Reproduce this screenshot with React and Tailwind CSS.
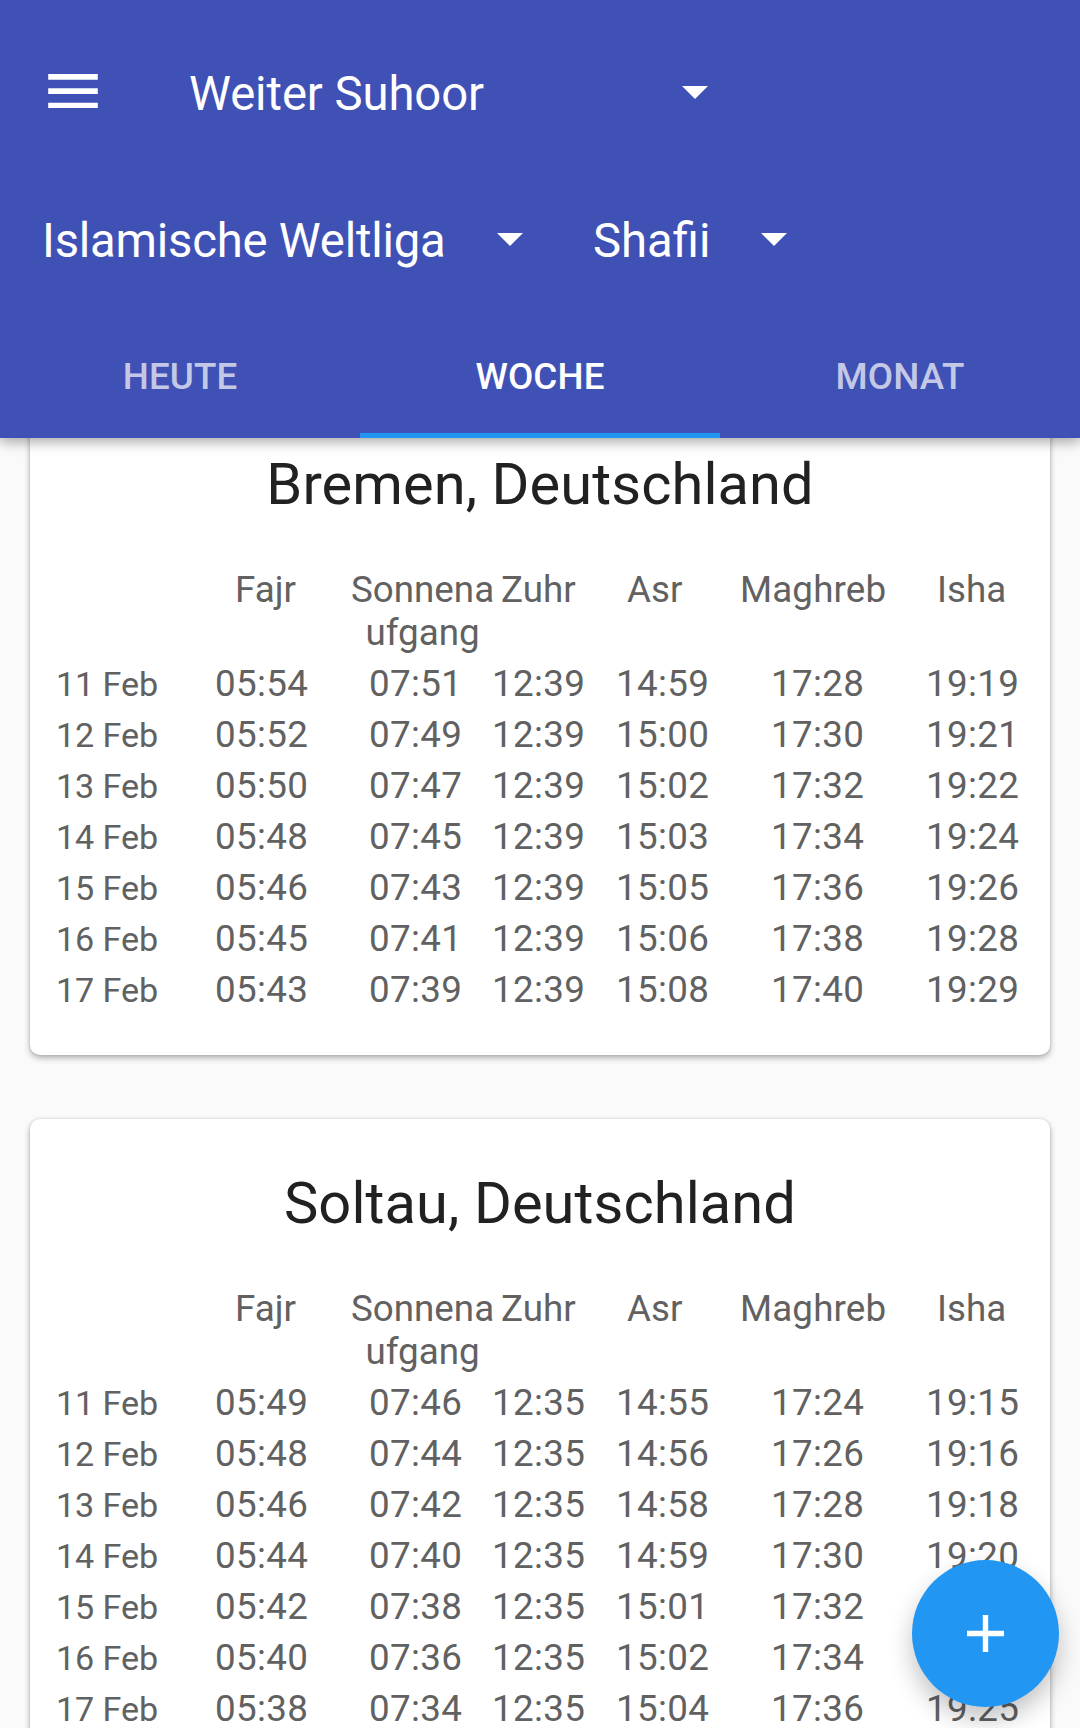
import React, { useState } from 'react'
import { clsx } from 'clsx'

const cities = [
  {
    name: 'Bremen, Deutschland',
    days: [
      ['11 Feb', '05:54', '07:51', '12:39', '14:59', '17:28', '19:19'],
      ['12 Feb', '05:52', '07:49', '12:39', '15:00', '17:30', '19:21'],
      ['13 Feb', '05:50', '07:47', '12:39', '15:02', '17:32', '19:22'],
      ['14 Feb', '05:48', '07:45', '12:39', '15:03', '17:34', '19:24'],
      ['15 Feb', '05:46', '07:43', '12:39', '15:05', '17:36', '19:26'],
      ['16 Feb', '05:45', '07:41', '12:39', '15:06', '17:38', '19:28'],
      ['17 Feb', '05:43', '07:39', '12:39', '15:08', '17:40', '19:29'],
    ],
  },
  {
    name: 'Soltau, Deutschland',
    days: [
      ['11 Feb', '05:49', '07:46', '12:35', '14:55', '17:24', '19:15'],
      ['12 Feb', '05:48', '07:44', '12:35', '14:56', '17:26', '19:16'],
      ['13 Feb', '05:46', '07:42', '12:35', '14:58', '17:28', '19:18'],
      ['14 Feb', '05:44', '07:40', '12:35', '14:59', '17:30', '19:20'],
      ['15 Feb', '05:42', '07:38', '12:35', '15:01', '17:32', '19:22'],
      ['16 Feb', '05:40', '07:36', '12:35', '15:02', '17:34', '19:23'],
      ['17 Feb', '05:38', '07:34', '12:35', '15:04', '17:36', '19:25'],
    ],
  },
]

const tabs = ['Heute', 'Woche', 'Monat']

const App = () => {

  const [active, setActive] = useState('Woche')

  return (
    <div className="relative flex h-[1728px] w-[1080px] flex-col overflow-hidden bg-[#fafafa] font-[Roboto,sans-serif]">

      {/* App bar */}
      <header className="relative z-10 flex h-[438px] shrink-0 flex-col bg-[#3f51b5] text-[47.25px] leading-[56px] text-white shadow-[0_4px_12px_rgba(0,0,0,0.34)]">

        <div className="flex h-[147px] items-end pb-[25px] pl-[48px]">
          <button className="mb-[14px] w-[50px]" aria-label="Menü">
            <svg viewBox="0 0 50 34.4" className="block h-[34.4px] w-[50px]" fill="currentColor">
              <path d="M.2 0h49.6v5.7H.2zM.2 14.3h49.6V20H.2zM.2 28.7h49.6v5.7H.2z" />
            </svg>
          </button>
          <Spinner label="Weiter Suhoor" className="ml-[91px] w-[519px] tracking-[-0.08px]" />
        </div>

        <div className="flex h-[147px] items-end pb-[25px] pl-[42px]">
          <Spinner label="Islamische Weltliga" className="w-[481px] tracking-[-0.22px]" />
          <Spinner label="Shafii" className="ml-[70px] w-[194px]" />
        </div>

        {/* Tabs */}
        <nav className="mt-auto flex h-[126px] text-[36.75px] leading-[43px] font-medium">
          {tabs.map(tab => (
            <button
              key={tab}
              onClick={() => setActive(tab)}
              className={clsx(
                'flex flex-1 justify-center border-b-[5px] pt-[43px] tracking-[0.1px] uppercase',
                tab === active ? 'border-[#2196f3] text-white' : 'border-transparent text-white/70'
              )}
            >
              {tab}
            </button>
          ))}
        </nav>
      </header>

      {/* Cities */}
      <main className="-mt-[38px] flex flex-col gap-[64px] px-[30px]">
        {cities.map(city => <CityCard key={city.name} city={city} />)}
      </main>

      <button
        className="absolute top-[1560px] left-[912px] z-20 flex size-[147px] items-center justify-center rounded-full bg-[#2196f3] text-white shadow-[0_12px_24px_rgba(0,0,0,0.24)]"
        aria-label="Hinzufügen"
      >
        <svg viewBox="0 0 37 37" className="size-[37px]" fill="currentColor">
          <path d="M15.8 0h5.4v15.8H37v5.4H21.2V37h-5.4V21.2H0v-5.4h15.8z" />
        </svg>
      </button>
    </div>
  )
}

const Spinner = ({ label, className }) => (
  <button className={clsx('flex shrink-0 items-center justify-between text-left', className)}>
    <span className="whitespace-nowrap">{label}</span>
    <svg viewBox="0 0 26 13" className="mb-[3px] h-[13px] w-[26px]" fill="currentColor">
      <path d="M0 0h26L13 13z" />
    </svg>
  </button>
)

const CityCard = ({ city }) => (
  <section className="h-[655px] shrink-0 rounded-[10px] bg-white pt-[50px] text-[36.75px] text-[#616161] shadow-[0_3px_6px_rgba(0,0,0,0.3),0_0_3px_rgba(0,0,0,0.12)]">

    <h2 className="text-center text-[57.75px] leading-[68px] tracking-[0.1px] text-[#212121]">{city.name}</h2>

    <div className="mt-[50px] grid h-[86px] grid-cols-[116px_150px_126px_113px_197px_110px] pl-[205px] leading-[43px]">
      <span>Fajr</span>
      <span className="w-[143px] text-center">Sonnena<br />ufgang</span>
      <span>Zuhr</span>
      <span>Asr</span>
      <span className="tracking-[0.15px]">Maghreb</span>
      <span>Isha</span>
    </div>

    <div className="mt-[4px] flex flex-col">
      {city.days.map(([date, ...times]) => (
        <div
          key={date}
          className="grid h-[51px] grid-cols-[159px_154px_123px_124px_155px_155px_94px] items-baseline pl-[26px] leading-[51px]"
        >
          <span className="text-[34.125px] tracking-[-0.1px]">{date}</span>
          {times.map((time, i) => <span key={i} className="tracking-[0.35px]">{time}</span>)}
        </div>
      ))}
    </div>
  </section>
)

export default App
